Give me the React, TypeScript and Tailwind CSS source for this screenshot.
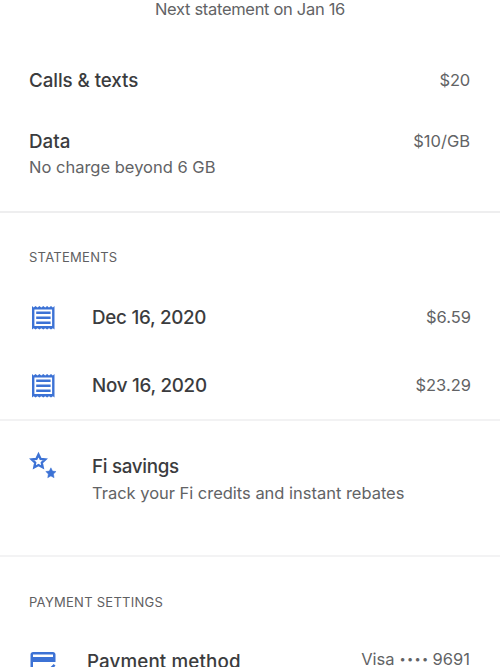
import type { ReactNode } from "react";

const title = "text-[18.8px] leading-6 font-medium text-[#3b3c3e] whitespace-nowrap";
const body = "text-[16.5px] leading-6 text-[#626365] whitespace-nowrap";

function ReceiptIcon() {
  return (
    <svg className="block h-6 w-6" viewBox="0 0 24 24" fill="#3c72d5">
      <path
        fillRule="evenodd"
        d="M1 0 2.7 1.4 4.5 0l2 1.4L8.4 0l1.9 1.4L12.3 0l1.9 1.4L16.1 0 18 1.4 20 0l1.9 1.4L23.5 0v23.6l-1.6-1.4-1.9 1.4-2-1.4-1.9 1.4-1.9-1.4-1.9 1.4-2-1.4-1.9 1.4-1.9-1.4-2 1.4-1.8-1.4L1 23.6ZM3.4 3.5v16.6h17.7V3.5Z"
      />
      <path d="M5.2 5.6h14.4V8H5.2zM5.2 10.6h14.4V13H5.2zM5.2 15.6h14.4V18H5.2z" />
    </svg>
  );
}

function StarsIcon() {
  return (
    <svg className="block h-[30px] w-[30px]" viewBox="0 0 30 30">
      <path
        transform="translate(10.5 10.6)"
        fill="none"
        stroke="#3c72d5"
        strokeWidth="2.3"
        d="M0-7.2 2.05-2.75 6.85-2.22 3.3 1.07 4.23 5.82 0 3.5-4.23 5.82-3.3 1.07-6.85-2.22-2.05-2.75Z"
      />
      <path
        transform="translate(22.9 22.2)"
        fill="#3c72d5"
        stroke="#3c72d5"
        strokeWidth="0.5"
        d="M0-5.4 1.6-2.1 5.14-1.67 2.55.8 3.17 4.5 0 2.7-3.17 4.5-2.55.8-5.14-1.67-1.6-2.1Z"
      />
    </svg>
  );
}

function CardIcon() {
  return (
    <svg className="block h-[30px] w-[30px]" viewBox="0 0 24 24" fill="#3c72d5">
      <path d="M20 4H4c-1.11 0-1.99.89-1.99 2L2 18c0 1.11.89 2 2 2h5v-2H4v-6h18V6c0-1.11-.89-2-2-2zm0 4H4V6h16v2zm-5.07 11.17-2.83-2.83-1.41 1.41L14.93 22 22 14.93l-1.41-1.41z" />
    </svg>
  );
}

function Statement({ date, amount }: { date: string; amount: string }) {
  return (
    <div className="flex h-[68px] items-center pr-[29px] pl-[31px]">
      <div className="w-[61px]">
        <ReceiptIcon />
      </div>
      <span className={`${title} mb-[1px] tracking-[-0.26px]`}>{date}</span>
      <span className={`${body} mb-[2px] ml-auto`}>{amount}</span>
    </div>
  );
}

function Heading({ children }: { children: ReactNode }) {
  return (
    <h2 className="pl-[29px] text-[13px] leading-5 tracking-[0.27px] text-[#5f6062]">{children}</h2>
  );
}

export default function App() {
  return (
    <main className="flex h-[667px] w-[500px] flex-col overflow-hidden bg-white font-['Inter','Liberation_Sans',sans-serif]">
      <section className="h-[213px] shrink-0 border-b-2 border-[#eeeeef]">
        <p className="-mt-[3px] text-center text-[16.5px] leading-6 tracking-[-0.31px] text-[#626365]">
          Next statement on Jan 16
        </p>
        <div className="mt-[47px] flex items-center justify-between pr-[30px] pl-[29px]">
          <span className={`${title} mt-px -mb-px tracking-[-0.08px]`}>Calls &amp; texts</span>
          <span className={`${body} tracking-[-0.2px]`}>$20</span>
        </div>
        <div className="mt-[37px] flex items-center justify-between pr-[30px] pl-[29px]">
          <span className={`${title} mt-px -mb-px`}>Data</span>
          <span className={body}>$10/GB</span>
        </div>
        <p className={`${body} mt-[2px] pl-[29px]`}>No charge beyond 6 GB</p>
      </section>
      <section className="h-[208px] shrink-0 border-b-2 border-[#f2f2f3] pt-[34px]">
        <Heading>STATEMENTS</Heading>
        <div className="mt-[17px]">
          <Statement date="Dec 16, 2020" amount="$6.59" />
          <Statement date="Nov 16, 2020" amount="$23.29" />
        </div>
      </section>
      <section className="flex h-[136px] shrink-0 items-start border-b-2 border-[#f3f3f4] pt-[30px] pl-[28px]">
        <div className="w-[64px]">
          <StarsIcon />
        </div>
        <div className="pt-[4px]">
          <p className={`${title} tracking-[-0.3px]`}>Fi savings</p>
          <p className={`${body} mt-[2px] tracking-[-0.02px]`}>
            Track your Fi credits and instant rebates
          </p>
        </div>
      </section>
      <section className="shrink-0 pt-[35px]">
        <Heading>PAYMENT SETTINGS</Heading>
        <div className="mt-[35px] flex items-start pr-[30px] pl-[28px]">
          <div className="w-[59px]">
            <CardIcon />
          </div>
          <span className={`${title} mt-[3px] tracking-[0.12px]`}>Payment method</span>
          <span className={`${body} ml-auto flex`}>
            Visa
            <span className="ml-[5px] w-[33px] text-[11px] tracking-[1.3px]">••••</span>
            9691
          </span>
        </div>
      </section>
    </main>
  );
}
